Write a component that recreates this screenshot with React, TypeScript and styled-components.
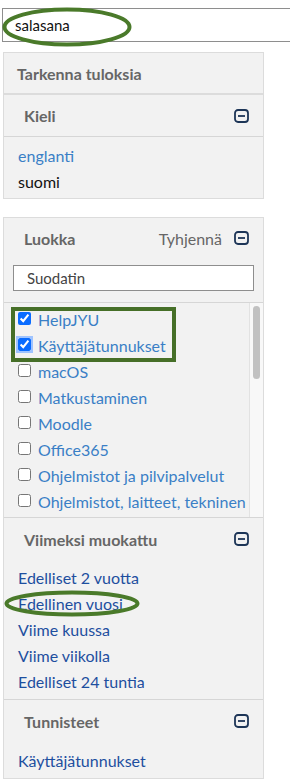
import React from 'react';
import styled, { createGlobalStyle } from 'styled-components';

const GlobalStyle = createGlobalStyle`
  html, body {
    margin: 0;
    padding: 0;
    background: #ffffff;
    overflow: hidden;
  }
  body {
    font-family: Lato, 'Noto Sans', 'Liberation Sans', sans-serif;
  }
`;

const categories = [
  { label: 'HelpJYU', checked: true },
  { label: 'Käyttäjätunnukset', checked: true, focused: true },
  { label: 'macOS' },
  { label: 'Matkustaminen' },
  { label: 'Moodle' },
  { label: 'Office365' },
  { label: 'Ohjelmistot ja pilvipalvelut' },
  { label: 'Ohjelmistot, laitteet, tekninen' },
];

const modified = ['Edelliset 2 vuotta', 'Edellinen vuosi', 'Viime kuussa', 'Viime viikolla', 'Edelliset 24 tuntia'];

function CollapseIcon() {
  return (
    <svg width='15' height='14' viewBox='0 0 15 14'>
      <rect x='1' y='1' width='13' height='12' rx='3' fill='none' stroke='#1d3557' strokeWidth='1.8' />
      <line x1='4' y1='7' x2='11' y2='7' stroke='#1d3557' strokeWidth='1.8' />
    </svg>
  );
}

function Ellipse({ w, h }: { w: number; h: number }) {
  return (
    <svg width={w} height={h} viewBox={`0 0 ${w} ${h}`}>
      <ellipse cx={w / 2} cy={h / 2} rx={w / 2 - 2.5} ry={h / 2 - 2.5} fill='none' stroke='#4a7a2a' strokeWidth='4' />
    </svg>
  );
}

export default function App() {
  return (
    <>
      <GlobalStyle />
      <Page>
        <SearchWrap>
          <SearchInput defaultValue='salasana' />
          <SearchMark>
            <Ellipse w={130} h={40} />
          </SearchMark>
        </SearchWrap>

        <Box>
          <BoxTitle>Tarkenna tuloksia</BoxTitle>
          <Header>
            <HeaderTitle>Kieli</HeaderTitle>
            <CollapseIcon />
          </Header>
          <Items $top={6} $bottom={3}>
            <Link $tone='light'>englanti</Link>
            <Plain>suomi</Plain>
          </Items>
        </Box>

        <Box $gap>
          <Header $height={40} $noLine>
            <HeaderTitle>Luokka</HeaderTitle>
            <HeaderActions>
              <Clear>Tyhjennä</Clear>
              <CollapseIcon />
            </HeaderActions>
          </Header>
          <FilterRow>
            <FilterInput defaultValue='Suodatin' />
          </FilterRow>
          <ListArea>
            <CheckList>
              {categories.map((c) => (
                <CheckRow key={c.label}>
                  <Check type='checkbox' defaultChecked={c.checked} $focused={c.focused} />
                  <Link $tone='light'>{c.label}</Link>
                </CheckRow>
              ))}
              <Highlight />
            </CheckList>
            <ScrollTrack>
              <ScrollThumb />
            </ScrollTrack>
          </ListArea>

          <Header $noLine>
            <HeaderTitle>Viimeksi muokattu</HeaderTitle>
            <CollapseIcon />
          </Header>
          <Items $top={5} $bottom={4} $line>
            {modified.map((m) => (
              <ItemWrap key={m}>
                <Link $tone='dark'>{m}</Link>
                {m === 'Edellinen vuosi' && (
                  <ItemMark>
                    <Ellipse w={136} h={27} />
                  </ItemMark>
                )}
              </ItemWrap>
            ))}
          </Items>

          <Header $noLine>
            <HeaderTitle>Tunnisteet</HeaderTitle>
            <CollapseIcon />
          </Header>
          <Items $top={6} $bottom={4}>
            <Link $tone='dark'>Käyttäjätunnukset</Link>
          </Items>
        </Box>
      </Page>
    </>
  );
}

const Page = styled('div')`
  padding-top: 8px;
  width: 290px;
`;

const SearchWrap = styled('div')`
  position: relative;
  margin-left: 2px;
`;

const SearchInput = styled('input')`
  box-sizing: border-box;
  display: block;
  width: 300px;
  height: 34px;
  border: 1px solid #8e8e8e;
  padding: 0 0 0 12px;
  font-family: Lato, 'Noto Sans', sans-serif;
  font-size: 15px;
  color: #111;
  background: #fff;
  outline: none;
`;

const SearchMark = styled('div')`
  position: absolute;
  left: 0;
  top: -1px;
  line-height: 0;
  pointer-events: none;
`;

const Box = styled('div')<{ $gap?: boolean }>`
  box-sizing: border-box;
  width: 261px;
  margin: ${(p) => (p.$gap ? '18px' : '10px')} 0 0 3px;
  background: #f2f2f2;
  border: 1px solid #dcdcdc;
`;

const BoxTitle = styled('div')`
  height: 40px;
  display: flex;
  align-items: center;
  padding-left: 13px;
  font-size: 16px;
  font-weight: 700;
  color: #666;
  border-bottom: 2px solid #dcdcdc;
`;

const Header = styled('div')<{ $height?: number; $noLine?: boolean }>`
  height: ${(p) => p.$height ?? 42}px;
  box-sizing: border-box;
  display: flex;
  align-items: center;
  justify-content: space-between;
  padding: 0 14px 0 20px;
  border-bottom: ${(p) => (p.$noLine ? 'none' : '1px solid #d6d6d6')};
`;

const HeaderTitle = styled('span')`
  font-size: 16px;
  font-weight: 700;
  color: #666;
`;

const HeaderActions = styled('div')`
  display: flex;
  align-items: center;
  gap: 12px;
`;

const Clear = styled('span')`
  font-size: 16px;
  color: #666;
`;

const Items = styled('div')<{ $top: number; $bottom: number; $line?: boolean }>`
  display: flex;
  flex-direction: column;
  padding: ${(p) => p.$top}px 0 ${(p) => p.$bottom}px 14px;
  border-bottom: ${(p) => (p.$line ? '1px solid #d6d6d6' : 'none')};
`;

const ItemWrap = styled('div')`
  position: relative;
`;

const ItemMark = styled('div')`
  position: absolute;
  left: -14px;
  top: -1px;
  line-height: 0;
  pointer-events: none;
`;

const Link = styled('span')<{ $tone: 'light' | 'dark' }>`
  display: block;
  line-height: 26px;
  font-size: 16px;
  color: ${(p) => (p.$tone === 'light' ? '#3a7fc6' : '#1e4f9f')};
  white-space: nowrap;
`;

const Plain = styled('span')`
  display: block;
  line-height: 26px;
  font-size: 16px;
  color: #111;
`;

const FilterRow = styled('div')`
  padding: 7px 9px 11px 9px;
  border-bottom: 1px solid #d6d6d6;
`;

const FilterInput = styled('input')`
  box-sizing: border-box;
  display: block;
  width: 100%;
  height: 26px;
  border: 1px solid #8e8e8e;
  background: #fff;
  padding: 0 0 0 13px;
  font-family: Lato, 'Noto Sans', sans-serif;
  font-size: 15px;
  color: #444;
  outline: none;
`;

const ListArea = styled('div')`
  display: flex;
  height: 214px;
  border-bottom: 1px solid #d6d6d6;
`;

const CheckList = styled('div')`
  position: relative;
  flex: 1;
  padding: 4px 0 0 13px;
  overflow: hidden;
`;

const CheckRow = styled('label')`
  display: flex;
  align-items: center;
  gap: 7px;
  height: 26px;
`;

const Check = styled('input')<{ $focused?: boolean }>`
  width: 13px;
  height: 13px;
  margin: 0 0 4px 1px;
  accent-color: #0a6cff;
  box-shadow: ${(p) => (p.$focused ? '0 0 0 2px #9ec3ff' : 'none')};
  border-radius: 3px;
`;

const Highlight = styled('div')`
  position: absolute;
  left: 7px;
  top: 4px;
  width: 165px;
  height: 55px;
  box-sizing: border-box;
  border: 4px solid #466f28;
  pointer-events: none;
`;

const ScrollTrack = styled('div')`
  width: 14px;
  background: #f8f8f8;
  border-left: 1px solid #e2e2e2;
  padding: 3px 0 0 3px;
  box-sizing: border-box;
`;

const ScrollThumb = styled('div')`
  width: 7px;
  height: 73px;
  border-radius: 4px;
  background: #c1c1c1;
`;
